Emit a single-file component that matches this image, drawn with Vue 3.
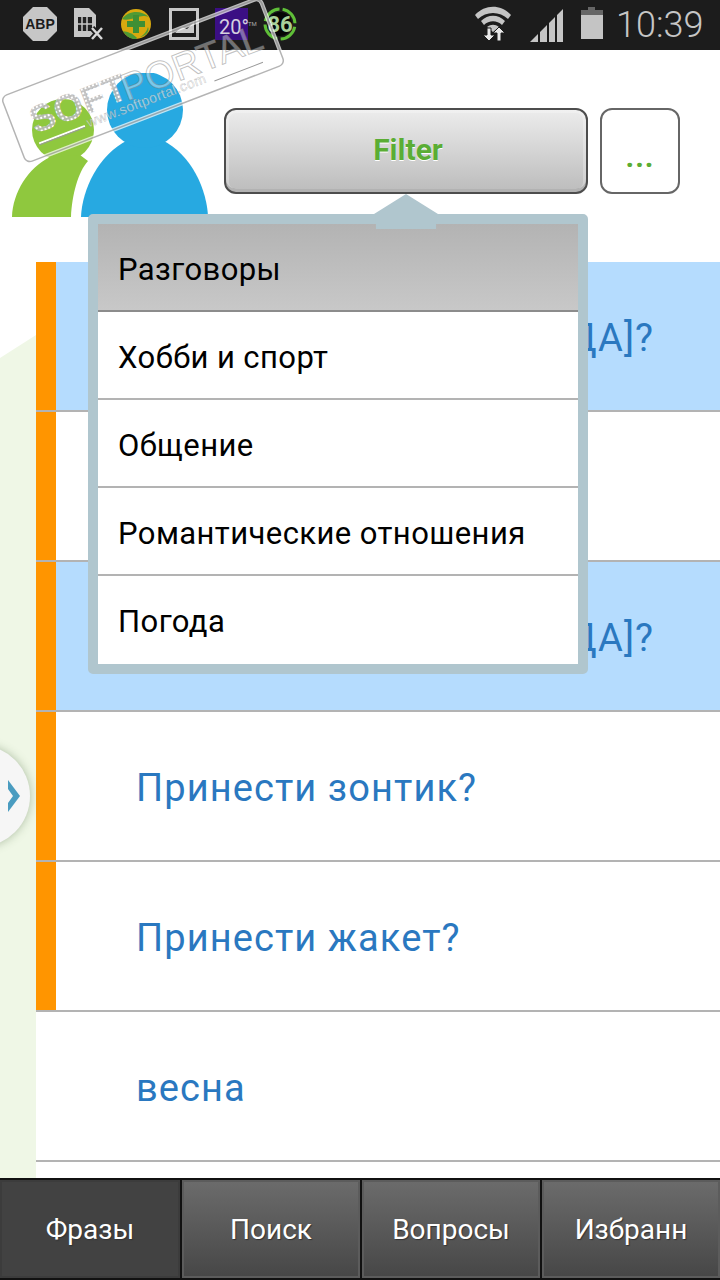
<script setup>
const phrases = [
  { text: 'Сегодня холодно [НЕТ/ДА]?', mark: true, blue: true },
  { text: 'Какая погода?', mark: true },
  { text: 'Сегодня холодно [НЕТ/ДА]?', mark: true, blue: true },
  { text: 'Принести зонтик?', mark: true },
  { text: 'Принести жакет?', mark: true },
  { text: 'весна' },
  { text: '' }
]

const menuItems = ['Разговоры', 'Хобби и спорт', 'Общение', 'Романтические отношения', 'Погода']
const tabs = ['Фразы', 'Поиск', 'Вопросы', 'Избранн']
</script>

<template>
  <div class="page">
    <!-- status bar -->
    <div class="status">
      <svg class="status-left" width="300" height="50" viewBox="0 0 300 50">
        <polygon points="33,7 47,7 57,17 57,31 47,41 33,41 23,31 23,17" fill="#c6c6c6" />
        <text x="40" y="29" class="abp">ABP</text>

        <path d="M74 8h15l7 7v22H74z" fill="#c6c6c6" />
        <path d="M78 17h14v14H78z" fill="#222" />
        <path d="M82 17v14M87 17v14M78 24h14" stroke="#c6c6c6" stroke-width="1.5" />
        <path d="M92 28l10 11M102 28L92 39" stroke="#1c1c1c" stroke-width="6" />
        <path d="M92 28l10 11M102 28L92 39" stroke="#d8d8d8" stroke-width="2.5" />

        <circle cx="136" cy="24" r="15" fill="#d9a90f" />
        <path d="M122 19c6-8 18-10 27-2-8-3-12 1-18 2-4 1-7 1-9 0zM123 31c5 1 9 2 13 6 3 2-1 2-3 2-4-1-8-4-10-8zM140 37c4-2 7-6 8-10 2 4-2 9-8 10z" fill="#4f9a35" />
        <path d="M133 15h6v6h6v6h-6v6h-6v-6h-6v-6h6z" fill="#3f8f34" />

        <rect x="170.500" y="9.500" width="27" height="29" fill="#1c1c1c" stroke="#c8c8c8" stroke-width="3" />
        <path d="M175 33l7-6 5 2 7-7v11h-19z" fill="#c8c8c8" />

        <rect x="215" y="8" width="33" height="32" fill="#3b0f84" />
        <text x="219" y="34" class="temp">20°</text>
        <text x="248" y="26" class="tm">TM</text>

        <circle cx="280" cy="24" r="12" fill="#050505" />
        <circle cx="280" cy="24" r="15" fill="none" stroke="#5fbf38" stroke-width="3" stroke-dasharray="20 3.500" transform="rotate(-80 280 24)" />
        <text x="280" y="32" class="ring-num">86</text>
      </svg>

      <svg class="status-right" width="140" height="50" viewBox="0 0 140 50">
        <path d="M5 15c10-11 26-11 36 0l-3 4c-8-8-22-8-30 0zM11 21c7-7 17-7 24 0l-3 4c-5-5-13-5-18 0zM17 27c4-3 8-3 12 0l-6 5z" fill="#c4c4c4" />
        <path d="M17 28h4v7h4l-6 6-6-6h4zM27 41v-8h-4l6-6 6 6h-4v8z" fill="#e8e8e8" stroke="#1c1c1c" stroke-width="1" />
        <path d="M60 42l8-8v8zM70 32l7-7v17h-7zM79 23l6-6v25h-6zM87 15l6-6v33h-6z" fill="#c6c6c6" />
        <path d="M118 10V7h7v3h8v9h-22v-9z" fill="#666" />
        <rect x="111" y="15" width="22" height="24" fill="#c4c4c4" />
      </svg>
      <span class="time">10:39</span>
    </div>

    <!-- header -->
    <div class="header">
      <svg class="logo" width="196" height="144" viewBox="12 73 196 144">
        <circle cx="63" cy="130" r="31" fill="#8fc83e" />
        <path d="M12 217C13 192 28 168 50 157L80 155L88 161C78 172 72 195 71 217Z" fill="#8fc83e" />
        <path d="M81 217C82 190 98 155 128 140L162 140C192 155 207 190 208 217Z" fill="#27a9e1" />
        <circle cx="145" cy="110" r="38" fill="#27a9e1" />
      </svg>
      <button class="filter-btn">Filter</button>
      <button class="more-btn">...</button>
    </div>

    <!-- phrase list -->
    <div class="content">
      <div class="side">
        <div class="side-fill"></div>
      </div>
      <div class="list">
        <div
          v-for="(row, i) in phrases"
          :key="i"
          class="row"
          :class="{ blue: row.blue, marked: row.mark }"
        >
          <span class="row-text">{{ row.text }}</span>
        </div>
      </div>
    </div>

    <!-- bottom tabs -->
    <div class="tabs">
      <div v-for="(tab, i) in tabs" :key="tab" class="tab" :class="{ active: i === 0 }">{{ tab }}</div>
    </div>

    <!-- slide-out handle -->
    <div class="handle">
      <svg width="14" height="32" viewBox="0 0 14 32">
        <path d="M1 0l12 16L1 32l0-9 5-7-5-7z" fill="#4a9cc0" />
      </svg>
    </div>

    <!-- filter dropdown -->
    <div class="menu">
      <div class="menu-arrow"></div>
      <div
        v-for="(item, i) in menuItems"
        :key="item"
        class="menu-item"
        :class="{ selected: i === 0 }"
      >{{ item }}</div>
    </div>

    <!-- watermark stamp -->
    <svg class="stamp" width="300" height="170" viewBox="0 0 300 170">
      <defs>
        <pattern id="dots" width="4" height="4" patternUnits="userSpaceOnUse">
          <rect x="0.500" y="0.500" width="3" height="3" fill="#fff" stroke="#b5b5b5" stroke-width="0.8" />
        </pattern>
      </defs>
      <g transform="translate(1 97) rotate(-21)">
        <rect x="0" y="0" width="277" height="71" rx="6" fill="none" stroke="#fff" stroke-opacity="0.7" stroke-width="4" />
        <rect x="0" y="0" width="277" height="71" rx="6" fill="none" stroke="#777" stroke-opacity="0.55" stroke-width="1.500" />
        <text x="19" y="47" class="stamp-soft" fill="url(#dots)">SOFT</text>
        <text x="116" y="49" class="stamp-portal">PORTAL</text>
        <text x="71" y="60" class="stamp-url">www.softportal.com</text>
        <path d="M19 57h49M205 60h52" stroke="#fff" stroke-width="2" />
        <path d="M19 58.500h49M205 61.500h52" stroke="#999" stroke-width="1" />
      </g>
    </svg>
  </div>
</template>

<style>
html, body {
  margin: 0;
  background: #fff;
}
</style>

<style scoped>
.page {
  position: relative;
  width: 720px;
  height: 1280px;
  overflow: hidden;
  display: flex;
  flex-direction: column;
  background: #fff;
  font-family: Roboto, "Liberation Sans", sans-serif;
}

.status {
  height: 50px;
  flex: none;
  display: flex;
  align-items: center;
  background: #1c1c1c;
}

.status-left {
  flex: none;
}

.status-right {
  flex: none;
  margin-left: 170px;
}

.abp {
  font: 700 14px "Liberation Sans", sans-serif;
  fill: #1c1c1c;
  text-anchor: middle;
}

.temp {
  font: 400 20px Roboto, sans-serif;
  fill: #d6d0e0;
}

.tm {
  font: 400 6px Roboto, sans-serif;
  fill: #aaa;
}

.ring-num {
  font: 700 22px Roboto, sans-serif;
  fill: #a9d09a;
  text-anchor: middle;
}

.time {
  margin-left: 6px;
  font-size: 36px;
  font-weight: 300;
  color: #c6c6c6;
}

.header {
  height: 212px;
  flex: none;
  display: flex;
  align-items: flex-start;
  box-sizing: border-box;
  padding: 23px 0 0 12px;
}

.logo {
  flex: none;
}

.filter-btn {
  width: 364px;
  height: 86px;
  margin: 35px 0 0 16px;
  padding: 0 0 4px 4px;
  box-sizing: border-box;
  border: 2px solid #4d4d4d;
  border-radius: 12px;
  background: linear-gradient(#ececec, #bcbcbc);
  box-shadow: inset 0 0 0 3px rgba(255, 255, 255, 0.25), inset 0 -3px 0 #999;
  color: #5aad34;
  font: 700 30px Roboto, sans-serif;
  text-shadow: 0 1px 0 #fff;
}

.more-btn {
  width: 80px;
  height: 86px;
  margin: 35px 0 0 12px;
  padding: 10px 0 0;
  box-sizing: border-box;
  border: 2px solid #666;
  border-radius: 12px;
  background: #fff;
  color: #5aad34;
  font: 700 30px Roboto, sans-serif;
  letter-spacing: 1px;
}

.content {
  flex: 1;
  min-height: 0;
  display: flex;
}

.side {
  width: 36px;
  flex: none;
}

.side-fill {
  height: 100%;
  background: #eff7e6;
  clip-path: polygon(0 96px, 100% 73px, 100% 100%, 0 100%);
}

.list {
  flex: 1;
  min-width: 0;
  overflow: hidden;
}

.row {
  position: relative;
  height: 150px;
  box-sizing: border-box;
  display: flex;
  align-items: center;
  padding: 4px 0 0 100px;
  border-bottom: 2px solid #b3b3b3;
}

.row.blue {
  background: #b5dcfe;
}

.row.blue .row-text {
  word-spacing: -1.3px;
}

.row.marked::before {
  content: "";
  position: absolute;
  left: 0;
  top: 0;
  bottom: 0;
  width: 20px;
  background: #ff9500;
}

.row-text {
  font: 400 38px Roboto, sans-serif;
  letter-spacing: 1.1px;
  color: #2a78c0;
  white-space: nowrap;
}

.tabs {
  height: 102px;
  flex: none;
  box-sizing: border-box;
  display: flex;
  gap: 2px;
  padding: 2px 0;
  background: #111;
}

.tab {
  flex: 0 0 178px;
  min-width: 0;
  box-sizing: border-box;
  display: flex;
  align-items: center;
  justify-content: center;
  border: 2px solid #5c5c5c;
  background: linear-gradient(#6b6b6b, #474747);
  color: #fff;
  font-size: 28px;
  text-shadow: 1px 1px 1px #333;
  overflow: hidden;
  white-space: nowrap;
}

.tab.active {
  flex-basis: 180px;
  border-color: #3c3c3c;
  background: #424242;
}

.handle {
  position: absolute;
  left: -72px;
  top: 745px;
  width: 102px;
  height: 102px;
  border-radius: 50%;
  background: #f6f6f6;
  box-shadow: 0 0 10px rgba(90, 120, 80, 0.45);
  display: flex;
  align-items: center;
  justify-content: flex-end;
  padding-right: 9px;
  box-sizing: border-box;
}

.menu {
  position: absolute;
  left: 88px;
  top: 214px;
  width: 500px;
  box-sizing: border-box;
  border: 10px solid #b0c6ce;
  border-radius: 5px;
  background: #fff;
}

.menu-arrow {
  position: absolute;
  left: 276px;
  top: -30px;
  width: 64px;
  height: 35px;
  background: #b0c6ce;
  clip-path: polygon(50% 0, 100% 20px, 97% 20px, 97% 100%, 3% 100%, 3% 20px, 0 20px);
}

.menu-item {
  height: 88px;
  box-sizing: border-box;
  display: flex;
  align-items: center;
  padding: 4px 0 0 20px;
  border-bottom: 2px solid #b3b3b3;
  color: #000;
  font-size: 31px;
  letter-spacing: 0.42px;
}

.menu-item:last-child {
  border-bottom: none;
  padding-bottom: 2px;
}

.menu-item.selected {
  background: linear-gradient(#b3b3b3, #c8c8c8);
  border-bottom-color: #8c8c8c;
}

.stamp {
  position: absolute;
  left: 0;
  top: 0;
  pointer-events: none;
}

.stamp-soft {
  font: 700 38px "Liberation Sans", sans-serif;
}

.stamp-portal {
  font: 400 38px "Liberation Sans", sans-serif;
  fill: rgba(255, 255, 255, 0.4);
  stroke: rgba(120, 120, 120, 0.45);
  stroke-width: 1;
}

.stamp-url {
  font: 400 14px "Liberation Sans", sans-serif;
  letter-spacing: 0.3px;
  fill: rgba(255, 255, 255, 0.6);
  stroke: rgba(110, 110, 110, 0.5);
  stroke-width: 0.4;
}
</style>
